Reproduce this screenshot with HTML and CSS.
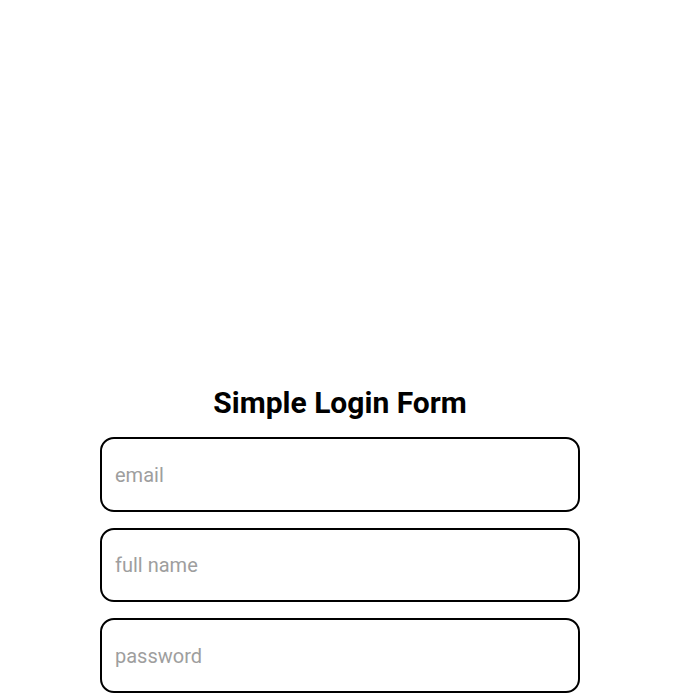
FILE: index.html
```html
<!DOCTYPE html>
<html>
<head>
<meta charset="utf-8">
<link rel="stylesheet" href="styles.css">
</head>
<body>
<main class="page">
  <form class="form">
    <h1 class="title">Simple Login Form</h1>
    <input class="field" type="email" placeholder="email">
    <input class="field" type="text" placeholder="full name">
    <input class="field" type="password" placeholder="password">
  </form>
</main>
</body>
</html>
```
FILE: styles.css
```css
html, body {
  margin: 0;
  padding: 0;
  background: #fff;
  font-family: Roboto, "Liberation Sans", sans-serif;
}
.page {
  padding-top: 385px;
  display: flex;
  justify-content: center;
}
.form {
  width: 480px;
  display: flex;
  flex-direction: column;
  gap: 16px;
}
.title {
  margin: 0;
  text-align: center;
  font-size: 30px;
  line-height: 36px;
  font-weight: 700;
  color: #000;
}
.field {
  box-sizing: border-box;
  width: 480px;
  height: 74.5px;
  border: 2px solid #000;
  border-radius: 14px;
  padding: 1px 13px 0;
  font-family: Roboto, "Liberation Sans", sans-serif;
  font-size: 20px;
  color: #000;
  background: #fff;
  outline: none;
}
.field::placeholder {
  color: #9e9e9e;
}
```
